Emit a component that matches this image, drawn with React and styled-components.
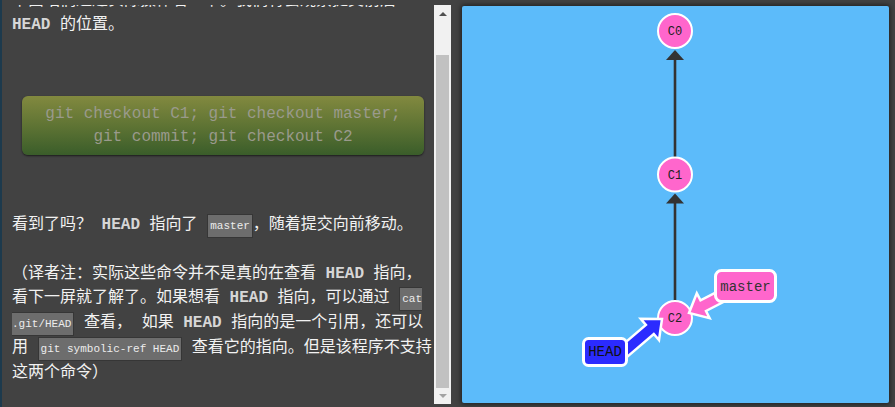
import React from "react";
import styled, { createGlobalStyle } from "styled-components";

const Global = createGlobalStyle`
  html, body { margin: 0; padding: 0; background: #424242; }
  #root { width: 895px; height: 407px; }
`;

const Root = styled.div`
  box-sizing: border-box;
  width: 895px;
  height: 407px;
  display: flex;
  align-items: flex-start;
  padding-top: 5px;
  border-left: 2px solid #1d3a4d;
  background: #424242;
  overflow: hidden;
`;

const TextPane = styled.div`
  box-sizing: border-box;
  flex: none;
  width: 432px;
  height: 399px;
  padding-left: 10px;
  overflow: hidden;
`;

const Content = styled.div`
  margin-top: -16px;
  color: #f2f2f2;
  font-family: "Liberation Mono", "Noto Sans CJK SC", monospace;
  font-size: 16px;
  line-height: 24px;
`;

const P = styled.p`
  margin: 0 0 24px;
`;

const B = styled.b`
  font-family: "Liberation Mono", monospace;
  font-weight: bold;
  color: #d6d6d6;
`;

const Code = styled.code`
  font-family: "Liberation Mono", monospace;
  font-size: 11px;
  color: #ececec;
  background: #6d6d6d;
  border: 1px solid #363636;
  padding: 5px 2px;
`;

const CodeBlock = styled.div`
  margin: 59px 10px 58px;
  padding: 7px 12px 6px;
  border-radius: 6px;
  background: linear-gradient(to bottom, #82893f 0%, #5f7434 50%, #3a5d2a 100%);
  box-shadow: 0 1px 2px rgba(0, 0, 0, 0.6);
  color: #9a9a8c;
  font-family: "Liberation Mono", monospace;
  font-size: 16px;
  line-height: 23px;
  text-align: center;
`;

const ScrollTrack = styled.div`
  flex: none;
  width: 17px;
  height: 399px;
  background: #f1f1f1;
  display: flex;
  flex-direction: column;
  align-items: center;
`;

const ScrollButton = styled.div`
  flex: ${(p) => (p.$grow ? "1" : "none")};
  height: ${(p) => (p.$grow ? "auto" : "17px")};
  width: 17px;
  display: flex;
  align-items: center;
  justify-content: center;
`;

const Tri = styled.div`
  width: 0;
  height: 0;
  border-left: 4px solid transparent;
  border-right: 4px solid transparent;
  ${(p) =>
    p.$up
      ? `border-bottom: 4px solid ${p.$color};`
      : `border-top: 4px solid ${p.$color};`}
`;

const Thumb = styled.div`
  width: 13px;
  height: 333px;
  margin-top: 33px;
  background: #c1c1c1;
`;

const Canvas = styled.div`
  flex: none;
  margin-left: 11px;
  margin-top: 1px;
  width: 427px;
  height: 397px;
  background: #5cbbfa;
  border-radius: 2px;
  box-shadow: 0 0 5px 1px rgba(0, 0, 0, 0.55);
`;

function arrowPoints(sx, sy, tx, ty, hl, hw, sw) {
  const dx = tx - sx;
  const dy = ty - sy;
  const L = Math.hypot(dx, dy);
  const ux = dx / L;
  const uy = dy / L;
  const nx = -uy;
  const ny = ux;
  const bx = tx - ux * hl;
  const by = ty - uy * hl;
  const pts = [
    [sx + nx * sw, sy + ny * sw],
    [bx + nx * sw, by + ny * sw],
    [bx + nx * hw, by + ny * hw],
    [tx, ty],
    [bx - nx * hw, by - ny * hw],
    [bx - nx * sw, by - ny * sw],
    [sx - nx * sw, sy - ny * sw],
  ];
  return pts.map((p) => `${p[0].toFixed(1)},${p[1].toFixed(1)}`).join(" ");
}

const commits = [
  { id: "C0", y: 25 },
  { id: "C1", y: 168.5 },
  { id: "C2", y: 312 },
];

function Graph() {
  const cx = 213;
  const r = 17;
  return (
    <svg width="427" height="397" viewBox="0 0 427 397">
      <line x1={cx} y1={52} x2={cx} y2={152} stroke="#333" strokeWidth="2.6" />
      <polygon points={`${cx},44 ${cx - 9},54 ${cx + 9},54`} fill="#333" />
      <line x1={cx} y1={195} x2={cx} y2={295} stroke="#333" strokeWidth="2.6" />
      <polygon points={`${cx},187.5 ${cx - 9},197.5 ${cx + 9},197.5`} fill="#333" />

      {commits.map((c) => (
        <g key={c.id}>
          <circle cx={cx} cy={c.y} r={r} fill="#ff66cc" stroke="#fff" strokeWidth="2" />
          <text
            x={cx}
            y={c.y + 4}
            textAnchor="middle"
            fontFamily="'Liberation Mono', monospace"
            fontSize="12"
            fill="#222"
          >
            {c.id}
          </text>
        </g>
      ))}

      <polygon
        points={arrowPoints(264, 288, 227, 307, 16, 14, 6)}
        fill="#ff66cc"
        stroke="#fff"
        strokeWidth="2.5"
      />
      <polygon
        points={arrowPoints(158, 349, 200, 313, 16, 14, 6)}
        fill="#2b2bff"
        stroke="#fff"
        strokeWidth="2.5"
      />

      <rect x="253.5" y="264.5" width="60" height="31" rx="6" fill="#ff66cc" stroke="#fff" strokeWidth="3" />
      <text
        x="283.5"
        y="284.5"
        textAnchor="middle"
        fontFamily="'Liberation Mono', monospace"
        fontSize="14"
        fill="#333"
      >
        master
      </text>

      <rect x="121.5" y="332.5" width="43" height="27" rx="5" fill="#2b2bff" stroke="#fff" strokeWidth="3" />
      <text
        x="143"
        y="349.5"
        textAnchor="middle"
        fontFamily="'Liberation Mono', monospace"
        fontSize="14"
        fill="#111"
      >
        HEAD
      </text>
    </svg>
  );
}

export default function App() {
  return (
    <>
      <Global />
      <Root>
        <TextPane>
          <Content>
            <P>
              下面咱们通过实际操作看一下。我们将会观察提交前后 <B>HEAD</B> 的位置。
            </P>
            <CodeBlock>git checkout C1; git checkout master; git commit; git checkout C2</CodeBlock>
            <P>
              看到了吗？ <B>HEAD</B> 指向了 <Code>master</Code>，随着提交向前移动。
            </P>
            <P>
              （译者注：实际这些命令并不是真的在查看 <B>HEAD</B> 指向，看下一屏就了解了。如果想看 <B>HEAD</B> 指向，可以通过 <Code>cat .git/HEAD</Code> 查看， 如果 <B>HEAD</B> 指向的是一个引用，还可以用 <Code>git symbolic-ref HEAD</Code> 查看它的指向。但是该程序不支持这两个命令）
            </P>
          </Content>
        </TextPane>
        <ScrollTrack>
          <ScrollButton>
            <Tri $up $color="#505050" />
          </ScrollButton>
          <Thumb />
          <ScrollButton $grow>
            <Tri $color="#a3a3a3" />
          </ScrollButton>
        </ScrollTrack>
        <Canvas>
          <Graph />
        </Canvas>
      </Root>
    </>
  );
}
